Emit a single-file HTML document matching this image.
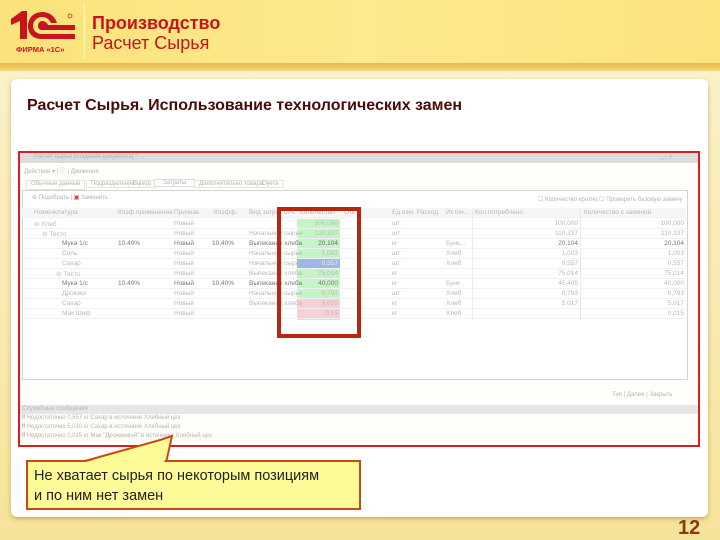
<!DOCTYPE html>
<html><head><meta charset="utf-8"><style>
*{margin:0;padding:0;box-sizing:border-box}
body{width:720px;height:540px;overflow:hidden;position:relative;background:#f7e7a0;font-family:"Liberation Sans",sans-serif}
.a{position:absolute}
#hdr{left:0;top:0;width:720px;height:63px;background:linear-gradient(90deg,#fbe27a,#fde98e 50%,#fde37e)}
#band{left:0;top:63px;width:720px;height:8px;background:linear-gradient(#eabb40,#f4d780)}
#bg{left:0;top:71px;width:720px;height:469px;background:linear-gradient(#fbf0c8,#f6e39a)}
#card{left:11px;top:79px;width:697px;height:438px;background:#fff;border-radius:6px;box-shadow:0 2px 4px rgba(150,120,40,.5)}
.t{font-size:6px;color:#b4b4b4;white-space:nowrap}
.r{position:absolute;left:22px;width:664px;height:10px;border-bottom:1px solid #f0f1f4}
.c{position:absolute;top:1px;font-size:6.5px;color:#b8b8b8;white-space:nowrap}
.rt{text-align:right}
</style></head><body>
<div class="a" id="hdr"></div><div class="a" id="band"></div><div class="a" id="bg"></div>
<svg class="a" style="left:8px;top:8px" width="70" height="50" viewBox="0 0 70 50">
<path d="M3 11 L14 3 L19 3 L19 31 L12 31 L12 13 L3 17 Z" fill="#c8141e"/>
<path d="M49 15 C47 8 41 4 34 4 C25 4 20 11 20 18 C20 26 25 31 34 31 L67 31 L67 26 L34 26 C28 26 25 22 25 18 C25 13 29 9 34 9 C38 9 41 11 43 15 Z" fill="#c8141e"/>
<path d="M40 17 L67 17 L67 22 L34 22 C31 22 30 20 30 18 C30 15 32 13 34 13 C37 13 39 15 40 17Z" fill="#c8141e"/>
<circle cx="62" cy="8" r="2" fill="none" stroke="#c8141e" stroke-width=".7"/>
<text x="8" y="44" font-size="7.5" font-weight="bold" fill="#c8141e" font-family="Liberation Sans">ФИРМА «1С»</text>
</svg>
<div class="a" style="left:84px;top:4px;width:1px;height:56px;background:#fff8d0"></div>
<div class="a" style="left:92px;top:13px;font-size:18px;font-weight:bold;color:#c8141e;line-height:20px">Производство</div>
<div class="a" style="left:92px;top:33px;font-size:18px;color:#c8141e;line-height:20px">Расчет Сырья</div>
<div class="a" id="card"></div>
<div class="a" style="left:27px;top:97px;font-size:16px;font-weight:bold;color:#4a0a0a">Расчет Сырья. Использование технологических замен</div>
<div class="a" style="left:18px;top:151px;width:682px;height:296px;border:2px solid #d42020;background:#fffefa"></div>
<div class="a" style="left:20px;top:153px;width:678px;height:10px;background:#dcdcdc"></div>
<div class="a t" style="left:34px;top:154px">Расчет сырья [создание документа] *</div>
<div class="a t" style="left:660px;top:154px">_ ▫ ×</div>
<div class="a t" style="left:24px;top:166px">Действия ▾ | ⓘ | Движения</div>
<div class="a" style="left:24px;top:179px;width:264px;height:11px">
<span class="a t" style="left:2px;top:1px;border:1px solid #e4e4e4;padding:0 4px;height:10px">Обычные данные</span>
<span class="a t" style="left:62px;top:1px;border:1px solid #e4e4e4;padding:0 4px">Подразделение</span>
<span class="a t" style="left:104px;top:1px;border:1px solid #e4e4e4;padding:0 4px">Выход</span>
<span class="a t" style="left:130px;top:0;border:1px solid #ddd;background:#fff;padding:0 8px">Затраты</span>
<span class="a t" style="left:170px;top:1px;border:1px solid #e4e4e4;padding:0 4px">Дополнительно товара</span>
<span class="a t" style="left:233px;top:1px;border:1px solid #e4e4e4;padding:0 4px">Счета</span>
</div>
<div class="a" style="left:22px;top:190px;width:666px;height:190px;border:1px solid #d4d4d4;background:#fff"></div>
<div class="a t" style="left:32px;top:194px">⊕ Подобрать | <span style="color:#c44">▣</span> Заменить</div>
<div class="a t" style="left:538px;top:196px">☐ Количество кратно ☐ Проверить базовую замену</div>
<div class="r" style="top:208px;background:#f6f6f6"></div>
<div class="a" style="left:297px;top:219px;width:43px;height:101px;background:#c4f5c4"></div>
<div class="a" style="left:297px;top:259px;width:43px;height:10px;background:#9cb8e0"></div>
<div class="a" style="left:297px;top:299px;width:43px;height:21px;background:#f8d0d8"></div>
<div style="position:absolute;left:0;top:208px">
<div class="c" style="left:34px">Номенклатура</div><div class="c" style="left:118px">Коэф.применения</div><div class="c" style="left:174px">Признак</div><div class="c" style="left:214px">Коэфф.</div><div class="c" style="left:249px">Вид затрат отч.</div><div class="c" style="left:300px">Количество</div><div class="c" style="left:344px">Отк</div><div class="c" style="left:392px">Ед.изм. Расход</div><div class="c" style="left:446px">Источ...</div><div class="c" style="left:475px">Кол.потреблено</div><div class="c" style="left:584px">Количество с заменой</div>
</div>
<div style="position:absolute;left:0;top:219px">
<div class="r" style="top:0"></div><div class="r" style="top:10px"></div><div class="r" style="top:20px"></div><div class="r" style="top:30px"></div><div class="r" style="top:40px"></div><div class="r" style="top:50px"></div><div class="r" style="top:60px"></div><div class="r" style="top:70px"></div><div class="r" style="top:80px"></div><div class="r" style="top:90px"></div>
</div>
<div style="position:absolute;left:0;top:219px">
<div class="c" style="top:1px;left:34px">⊖ Хлеб</div><div class="c" style="top:1px;left:174px">Новый</div><div class="c rt" style="top:1px;left:300px;width:38px">100,000</div><div class="c" style="top:1px;left:392px">шт</div><div class="c rt" style="top:1px;left:520px;width:58px">100,000</div><div class="c rt" style="top:1px;left:620px;width:64px">100,000</div>
<div class="c" style="top:11px;left:42px">⊖ Тесто</div><div class="c" style="top:11px;left:174px">Новый</div><div class="c" style="top:11px;left:249px">Начальное сырье</div><div class="c rt" style="top:11px;left:300px;width:38px">110,337</div><div class="c" style="top:11px;left:392px">шт</div><div class="c rt" style="top:11px;left:520px;width:58px">110,337</div><div class="c rt" style="top:11px;left:620px;width:64px">110,337</div>
<div class="c" style="top:21px;left:62px;color:#777">Мука 1/с</div><div class="c" style="top:21px;left:118px;color:#777">10,40%</div><div class="c" style="top:21px;left:174px;color:#777">Новый</div><div class="c" style="top:21px;left:212px;color:#777">10,40%</div><div class="c" style="top:21px;left:249px;color:#777">Выпекание хлеба</div><div class="c rt" style="top:21px;left:300px;width:38px;color:#666">20,104</div><div class="c" style="top:21px;left:392px">кг</div><div class="c" style="top:21px;left:446px">Бунк...</div><div class="c rt" style="top:21px;left:520px;width:58px;color:#777">20,104</div><div class="c rt" style="top:21px;left:620px;width:64px;color:#777">20,104</div>
<div class="c" style="top:31px;left:62px">Соль</div><div class="c" style="top:31px;left:174px">Новый</div><div class="c" style="top:31px;left:249px">Начальное сырье</div><div class="c rt" style="top:31px;left:300px;width:38px">1,003</div><div class="c" style="top:31px;left:392px">шт</div><div class="c" style="top:31px;left:446px">Хлеб</div><div class="c rt" style="top:31px;left:520px;width:58px">1,003</div><div class="c rt" style="top:31px;left:620px;width:64px">1,003</div>
<div class="c" style="top:41px;left:62px">Сахар</div><div class="c" style="top:41px;left:174px">Новый</div><div class="c" style="top:41px;left:249px">Начальное сырье</div><div class="c rt" style="top:41px;left:300px;width:38px;color:#eef">0,557</div><div class="c" style="top:41px;left:392px">шт</div><div class="c" style="top:41px;left:446px">Хлеб</div><div class="c rt" style="top:41px;left:520px;width:58px">0,557</div><div class="c rt" style="top:41px;left:620px;width:64px">0,557</div>
<div class="c" style="top:51px;left:56px">⊖ Тесто</div><div class="c" style="top:51px;left:174px">Новый</div><div class="c" style="top:51px;left:249px">Выпекание хлеба</div><div class="c rt" style="top:51px;left:300px;width:38px">75,014</div><div class="c" style="top:51px;left:392px">кг</div><div class="c rt" style="top:51px;left:520px;width:58px">75,014</div><div class="c rt" style="top:51px;left:620px;width:64px">75,014</div>
<div class="c" style="top:61px;left:62px;color:#777">Мука 1/с</div><div class="c" style="top:61px;left:118px;color:#777">10,40%</div><div class="c" style="top:61px;left:174px;color:#777">Новый</div><div class="c" style="top:61px;left:212px;color:#777">10,40%</div><div class="c" style="top:61px;left:249px;color:#777">Выпекание хлеба</div><div class="c rt" style="top:61px;left:300px;width:38px;color:#777">40,000</div><div class="c" style="top:61px;left:392px">кг</div><div class="c" style="top:61px;left:446px">Бунк</div><div class="c rt" style="top:61px;left:520px;width:58px">45,405</div><div class="c rt" style="top:61px;left:620px;width:64px">40,000</div>
<div class="c" style="top:71px;left:62px">Дрожжи</div><div class="c" style="top:71px;left:174px">Новый</div><div class="c" style="top:71px;left:249px">Начальное сырье</div><div class="c rt" style="top:71px;left:300px;width:38px">0,793</div><div class="c" style="top:71px;left:392px">шт</div><div class="c" style="top:71px;left:446px">Хлеб</div><div class="c rt" style="top:71px;left:520px;width:58px">0,793</div><div class="c rt" style="top:71px;left:620px;width:64px">0,793</div>
<div class="c" style="top:81px;left:62px">Сахар</div><div class="c" style="top:81px;left:174px">Новый</div><div class="c" style="top:81px;left:249px">Выпекание хлеба</div><div class="c rt" style="top:81px;left:300px;width:38px">5,010</div><div class="c" style="top:81px;left:392px">кг</div><div class="c" style="top:81px;left:446px">Хлеб</div><div class="c rt" style="top:81px;left:520px;width:58px">5,017</div><div class="c rt" style="top:81px;left:620px;width:64px">5,017</div>
<div class="c" style="top:91px;left:62px">Мак Шеф</div><div class="c" style="top:91px;left:174px">Новый</div><div class="c rt" style="top:91px;left:300px;width:38px">0,15</div><div class="c" style="top:91px;left:392px">кг</div><div class="c" style="top:91px;left:446px">Хлеб</div><div class="c rt" style="top:91px;left:620px;width:64px">0,015</div>
</div>
<div class="a" style="left:277px;top:207px;width:84px;height:131px;border:4px solid #b8260e"></div>
<div class="a" style="left:472px;top:208px;width:1px;height:112px;background:#e8eaee"></div>
<div class="a" style="left:580px;top:208px;width:1px;height:112px;background:#e8eaee"></div>
<div class="a t" style="left:612px;top:392px">Тип | Далее | Закрыть</div>
<div class="a" style="left:20px;top:405px;width:678px;height:9px;background:#e6e6e6"></div>
<div class="a t" style="left:22px;top:406px">Служебные сообщения</div>
<div class="a t" style="left:22px;top:415px"><span style="color:#d44">‼</span> Недостаточно 0,557 кг Сахар в источнике Хлебный цех</div>
<div class="a t" style="left:22px;top:424px"><span style="color:#d44">‼</span> Недостаточно 5,010 кг Сахар в источнике Хлебный цех</div>
<div class="a t" style="left:22px;top:433px"><span style="color:#d44">‼</span> Недостаточно 0,015 кг Мак "Дрожжевой" в источнике Хлебный цех</div>
<svg class="a" style="left:0;top:0" width="720" height="540">
<polygon points="78,463 160,440 172,436 166,463" fill="#fdfa9a" stroke="#c84a10" stroke-width="2"/>
</svg>
<div class="a" style="left:26px;top:460px;width:335px;height:50px;background:#fdfa98;border:2px solid #c84a10;font-size:14.5px;color:#222;line-height:20px;padding:4px 0 0 6px">Не хватает сырья по некоторым позициям<br>и по ним нет замен</div>
<svg class="a" style="left:0;top:0" width="720" height="540"><polygon points="82,463 161,442 170,439 164,463" fill="#fdfa98"/></svg>
<div class="a" style="left:678px;top:517px;font-size:20px;font-weight:bold;color:#8a3a10">12</div>
</body></html>
